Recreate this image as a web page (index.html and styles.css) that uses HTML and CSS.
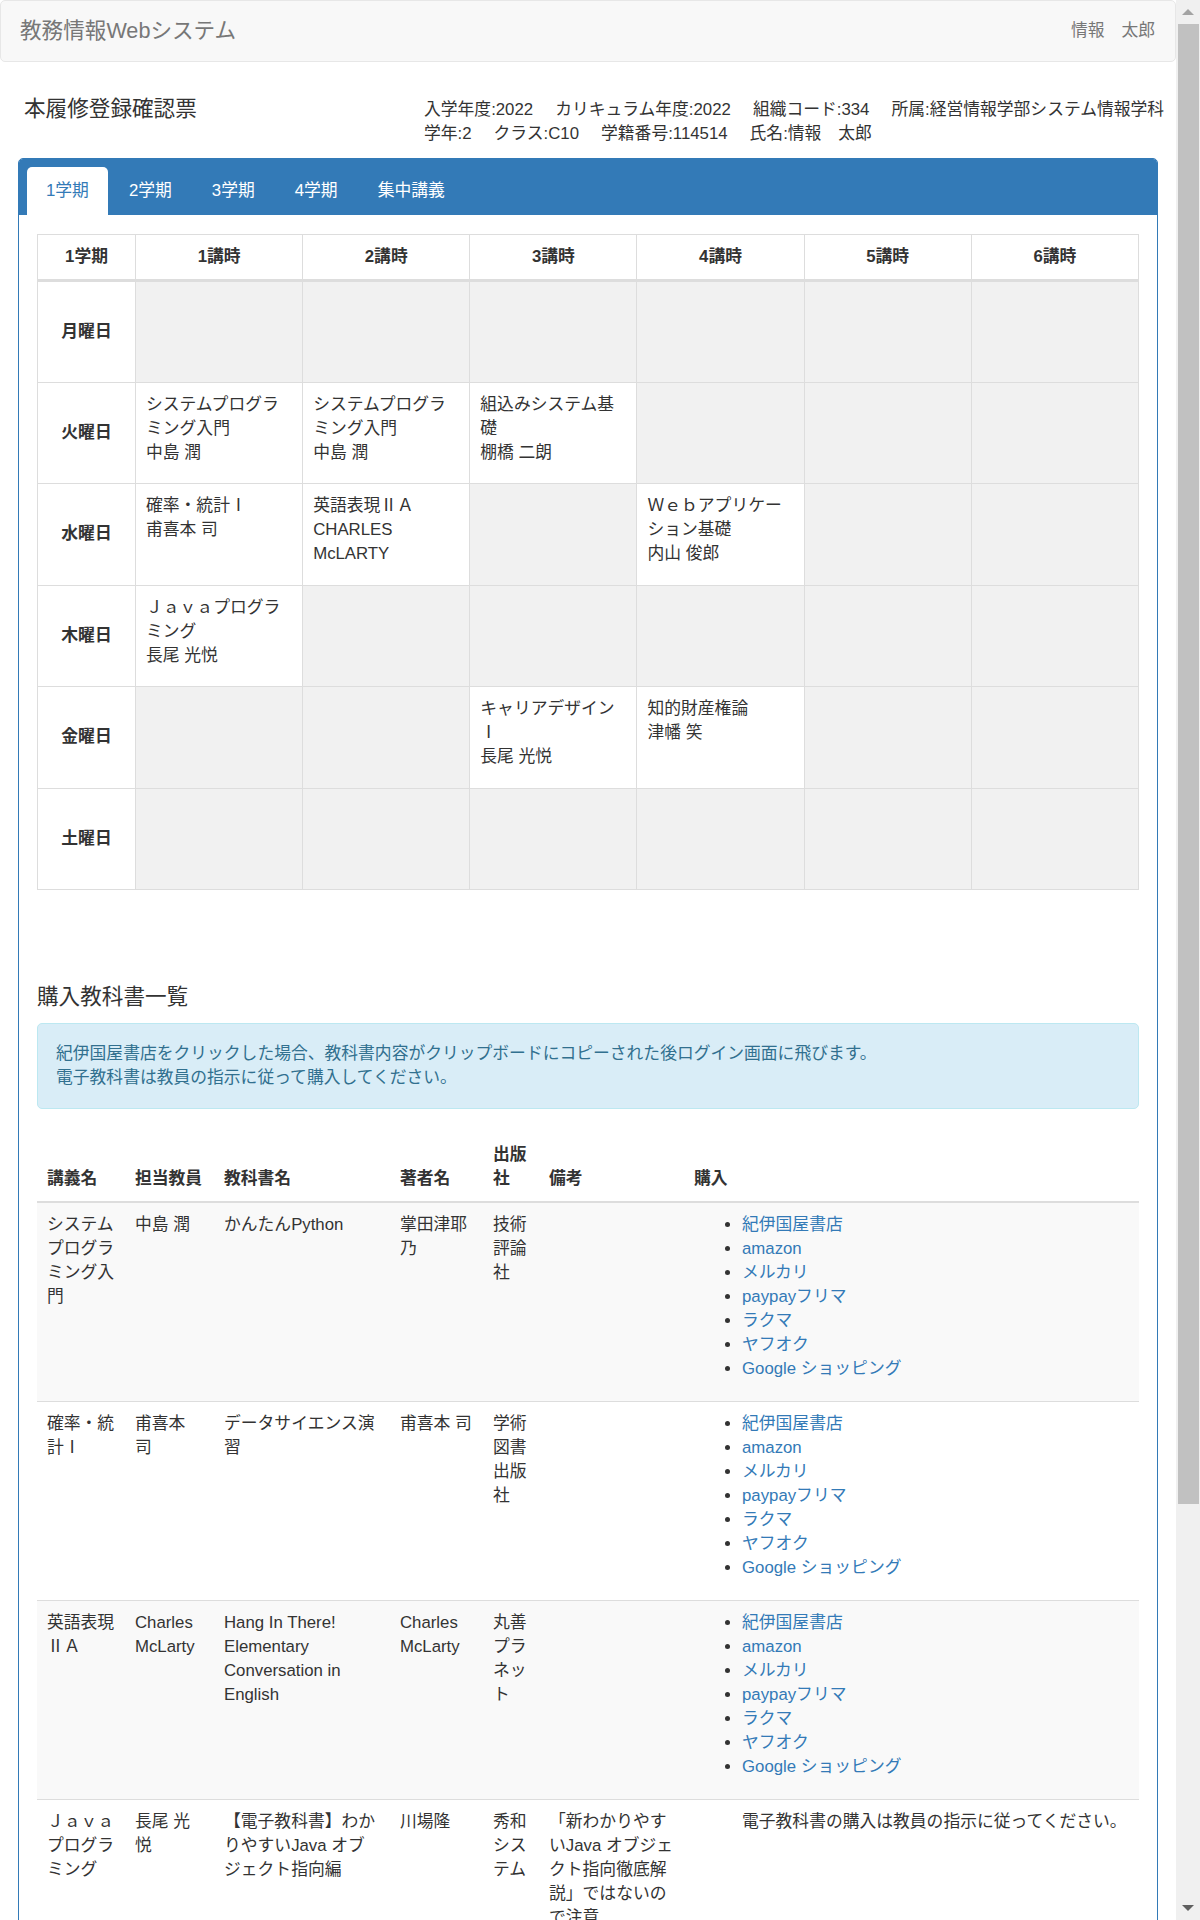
FILE: index.html
```html
<!DOCTYPE html>
<html lang="ja">

<head>
  <meta charset="UTF-8">
  <meta name="viewport" content="width=device-width, initial-scale=1.0">
  <title>本履修登録確認票</title>
  <link rel="stylesheet" href="styles.css">
</head>

<body>
  <div class="screen">
    <div class="page">
      <!-- ナビゲーションバー -->
      <nav class="navbar">
        <span class="brand">教務情報Webシステム</span>
        <span class="user">情報　太郎</span>
      </nav>

      <div class="container">
        <!-- 学生情報 -->
        <div class="page-head">
          <h4 class="page-title">本履修登録確認票</h4>
          <div class="student-info">
            <div><span>入学年度:2022</span><span>カリキュラム年度:2022</span><span>組織コード:334</span><span>所属:経営情報学部システム情報学科</span></div>
            <div><span>学年:2</span><span>クラス:C10</span><span>学籍番号:114514</span><span>氏名:情報　太郎</span></div>
          </div>
        </div>

        <div class="panel">
          <!-- 学期タブ -->
          <div class="panel-heading">
            <ul class="tabs">
              <li class="active"><a href="#">1学期</a></li>
              <li><a href="#">2学期</a></li>
              <li><a href="#">3学期</a></li>
              <li><a href="#">4学期</a></li>
              <li><a href="#">集中講義</a></li>
            </ul>
          </div>

          <div class="panel-body">
            <!-- 時間割 -->
            <table class="timetable">
              <colgroup>
                <col class="day-col">
                <col><col><col><col><col><col>
              </colgroup>
              <thead>
                <tr>
                  <th>1学期</th>
                  <th>1講時</th>
                  <th>2講時</th>
                  <th>3講時</th>
                  <th>4講時</th>
                  <th>5講時</th>
                  <th>6講時</th>
                </tr>
              </thead>
              <tbody>
                <tr>
                  <th>月曜日</th>
                  <td class="empty"></td><td class="empty"></td><td class="empty"></td>
                  <td class="empty"></td><td class="empty"></td><td class="empty"></td>
                </tr>
                <tr>
                  <th>火曜日</th>
                  <td>システムプログラミング入門<br>中島 潤</td>
                  <td>システムプログラミング入門<br>中島 潤</td>
                  <td>組込みシステム基礎<br>棚橋 二朗</td>
                  <td class="empty"></td><td class="empty"></td><td class="empty"></td>
                </tr>
                <tr>
                  <th>水曜日</th>
                  <td>確率・統計Ⅰ<br>甫喜本 司</td>
                  <td>英語表現ⅡＡ<br>CHARLES McLARTY</td>
                  <td class="empty"></td>
                  <td>Ｗｅｂアプリケーション基礎<br>内山 俊郎</td>
                  <td class="empty"></td><td class="empty"></td>
                </tr>
                <tr>
                  <th>木曜日</th>
                  <td>Ｊａｖａプログラミング<br>長尾 光悦</td>
                  <td class="empty"></td><td class="empty"></td><td class="empty"></td>
                  <td class="empty"></td><td class="empty"></td>
                </tr>
                <tr>
                  <th>金曜日</th>
                  <td class="empty"></td><td class="empty"></td>
                  <td>キャリアデザインⅠ<br>長尾 光悦</td>
                  <td>知的財産権論<br>津幡 笑</td>
                  <td class="empty"></td><td class="empty"></td>
                </tr>
                <tr>
                  <th>土曜日</th>
                  <td class="empty"></td><td class="empty"></td><td class="empty"></td>
                  <td class="empty"></td><td class="empty"></td><td class="empty"></td>
                </tr>
              </tbody>
            </table>

            <!-- 購入教科書 -->
            <h4 class="section-title">購入教科書一覧</h4>
            <div class="alert">
              紀伊国屋書店をクリックした場合、教科書内容がクリップボードにコピーされた後ログイン画面に飛びます。<br>
              電子教科書は教員の指示に従って購入してください。
            </div>

            <table class="books">
              <colgroup>
                <col class="c-course">
                <col class="c-teacher">
                <col class="c-title">
                <col class="c-author">
                <col class="c-publisher">
                <col class="c-note">
                <col>
              </colgroup>
              <thead>
                <tr>
                  <th>講義名</th>
                  <th>担当教員</th>
                  <th>教科書名</th>
                  <th>著者名</th>
                  <th>出版社</th>
                  <th>備考</th>
                  <th>購入</th>
                </tr>
              </thead>
              <tbody>
                <tr>
                  <td>システムプログラミング入門</td>
                  <td>中島 潤</td>
                  <td>かんたんPython</td>
                  <td>掌田津耶乃</td>
                  <td>技術評論社</td>
                  <td></td>
                  <td>
                    <ul class="shops">
                      <li><a href="#">紀伊国屋書店</a></li>
                      <li><a href="#">amazon</a></li>
                      <li><a href="#">メルカリ</a></li>
                      <li><a href="#">paypayフリマ</a></li>
                      <li><a href="#">ラクマ</a></li>
                      <li><a href="#">ヤフオク</a></li>
                      <li><a href="#">Google ショッピング</a></li>
                    </ul>
                  </td>
                </tr>
                <tr>
                  <td>確率・統計Ⅰ</td>
                  <td>甫喜本 司</td>
                  <td>データサイエンス演習</td>
                  <td>甫喜本 司</td>
                  <td>学術図書出版社</td>
                  <td></td>
                  <td>
                    <ul class="shops">
                      <li><a href="#">紀伊国屋書店</a></li>
                      <li><a href="#">amazon</a></li>
                      <li><a href="#">メルカリ</a></li>
                      <li><a href="#">paypayフリマ</a></li>
                      <li><a href="#">ラクマ</a></li>
                      <li><a href="#">ヤフオク</a></li>
                      <li><a href="#">Google ショッピング</a></li>
                    </ul>
                  </td>
                </tr>
                <tr>
                  <td>英語表現ⅡＡ</td>
                  <td>Charles McLarty</td>
                  <td>Hang In There! Elementary Conversation in English</td>
                  <td>Charles McLarty</td>
                  <td>丸善プラネット</td>
                  <td></td>
                  <td>
                    <ul class="shops">
                      <li><a href="#">紀伊国屋書店</a></li>
                      <li><a href="#">amazon</a></li>
                      <li><a href="#">メルカリ</a></li>
                      <li><a href="#">paypayフリマ</a></li>
                      <li><a href="#">ラクマ</a></li>
                      <li><a href="#">ヤフオク</a></li>
                      <li><a href="#">Google ショッピング</a></li>
                    </ul>
                  </td>
                </tr>
                <tr>
                  <td>Ｊａｖａプログラミング</td>
                  <td>長尾 光悦</td>
                  <td>【電子教科書】わかりやすいJava オブジェクト指向編</td>
                  <td>川場隆</td>
                  <td>秀和システム</td>
                  <td>「新わかりやすいJava オブジェクト指向徹底解説」ではないので注意</td>
                  <td><p class="ebook-note">電子教科書の購入は教員の指示に従ってください。</p></td>
                </tr>
              </tbody>
            </table>
          </div>
        </div>
      </div>
    </div>

    <!-- スクロールバー -->
    <div class="scrollbar">
      <span class="arrow up"></span>
      <span class="thumb"></span>
      <span class="rest"></span>
      <span class="arrow down"></span>
    </div>
  </div>
</body>

</html>
```

FILE: styles.css
```css
/* 全体 */
body {
  margin: 0;
  font-family: "Liberation Sans", "Noto Sans CJK JP", sans-serif;
  font-size: 16.8px;
  line-height: 24px;
  color: #333;
  background-color: #fff;
}

a {
  color: #337ab7;
  text-decoration: none;
}

.screen {
  display: flex;
  height: 100vh;
  overflow: hidden;
}

.page {
  flex: 1;
  min-width: 0;
}

/* ナビゲーションバー */
.navbar {
  display: flex;
  justify-content: space-between;
  align-items: center;
  min-height: 60px;
  padding: 0 20px 0 19px;
  margin-bottom: 24px;
  background-color: #f8f8f8;
  border: 1px solid #e7e7e7;
  border-radius: 5px;
}

.brand {
  font-size: 21.6px;
  color: #777;
}

.user {
  color: #777;
}

.container {
  padding: 0 18px;
}

/* 学生情報 */
.page-head {
  display: flex;
  padding-left: 6px;
  margin-bottom: 12px;
}

.page-title {
  flex: none;
  width: 400px;
  margin: 11px 0 0;
  font-size: 21.6px;
  font-weight: normal;
  line-height: 24px;
}

.student-info {
  margin-top: 12px;
  white-space: nowrap;
}

.student-info span {
  margin-right: 22px;
}

.student-info span:last-child {
  margin-right: 0;
}

/* パネル */
.panel {
  border: 1px solid #337ab7;
  border-radius: 5px;
}

.panel-heading {
  padding: 8px 8px 0;
  background-color: #337ab7;
  border-radius: 4px 4px 0 0;
}

.tabs {
  display: flex;
  margin: 0;
  padding: 0;
  list-style: none;
}

.tabs li {
  margin-right: 2px;
}

.tabs a {
  display: block;
  padding: 12px 19px;
  color: #fff;
  border-radius: 5px 5px 0 0;
}

.tabs .active a {
  background-color: #fff;
  color: #337ab7;
}

.panel-body {
  padding: 19px 18px 18px;
}

/* 時間割 */
.timetable {
  width: 100%;
  border-collapse: collapse;
  table-layout: fixed;
}

.timetable .day-col {
  width: 98px;
}

.timetable th,
.timetable td {
  padding: 10px;
  border: 1px solid #ddd;
  vertical-align: top;
  text-align: left;
}

.timetable thead tr {
  height: 44px;
}

.timetable thead th {
  text-align: center;
  vertical-align: middle;
  border-bottom-width: 3px;
}

.timetable tbody tr {
  height: 101.5px;
}

.timetable tbody th {
  text-align: center;
  vertical-align: middle;
}

.timetable .empty {
  background-color: #f1f1f1;
}

/* 購入教科書 */
.section-title {
  margin: 95px 0 14px;
  font-size: 21.6px;
  font-weight: normal;
  line-height: 24px;
}

.alert {
  padding: 18px;
  margin-bottom: 24px;
  color: #31708f;
  background-color: #d9edf7;
  border: 1px solid #bce8f1;
  border-radius: 5px;
}

.books {
  width: 100%;
  border-collapse: collapse;
  table-layout: fixed;
}

.books .c-course { width: 88px; }
.books .c-teacher { width: 89px; }
.books .c-title { width: 176px; }
.books .c-author { width: 93px; }
.books .c-publisher { width: 56px; }
.books .c-note { width: 145px; }

.books th,
.books td {
  padding: 10px;
  text-align: left;
  vertical-align: top;
  border-top: 1px solid #ddd;
}

.books thead th {
  vertical-align: bottom;
  border-top: 0;
  border-bottom: 2px solid #ddd;
}

.books tbody tr:nth-child(odd) {
  background-color: #f9f9f9;
}

.shops {
  margin: 0 0 10px;
  padding-left: 48px;
}

.ebook-note {
  margin: 0;
  padding-left: 48px;
}

/* スクロールバー */
.scrollbar {
  display: flex;
  flex-direction: column;
  width: 24px;
  height: 100vh;
  background-color: #f0f0f0;
}

.scrollbar .arrow {
  display: flex;
  align-items: center;
  justify-content: center;
  height: 24px;
}

.scrollbar .arrow::before {
  content: "";
  border-left: 6px solid transparent;
  border-right: 6px solid transparent;
}

.scrollbar .up::before {
  border-bottom: 6px solid #a3a3a3;
}

.scrollbar .down::before {
  border-top: 6px solid #606060;
}

.scrollbar .thumb {
  height: 1480px;
  margin: 0 1px 0 2px;
  background-color: #c1c1c1;
}

.scrollbar .rest {
  flex: 1;
}
```
